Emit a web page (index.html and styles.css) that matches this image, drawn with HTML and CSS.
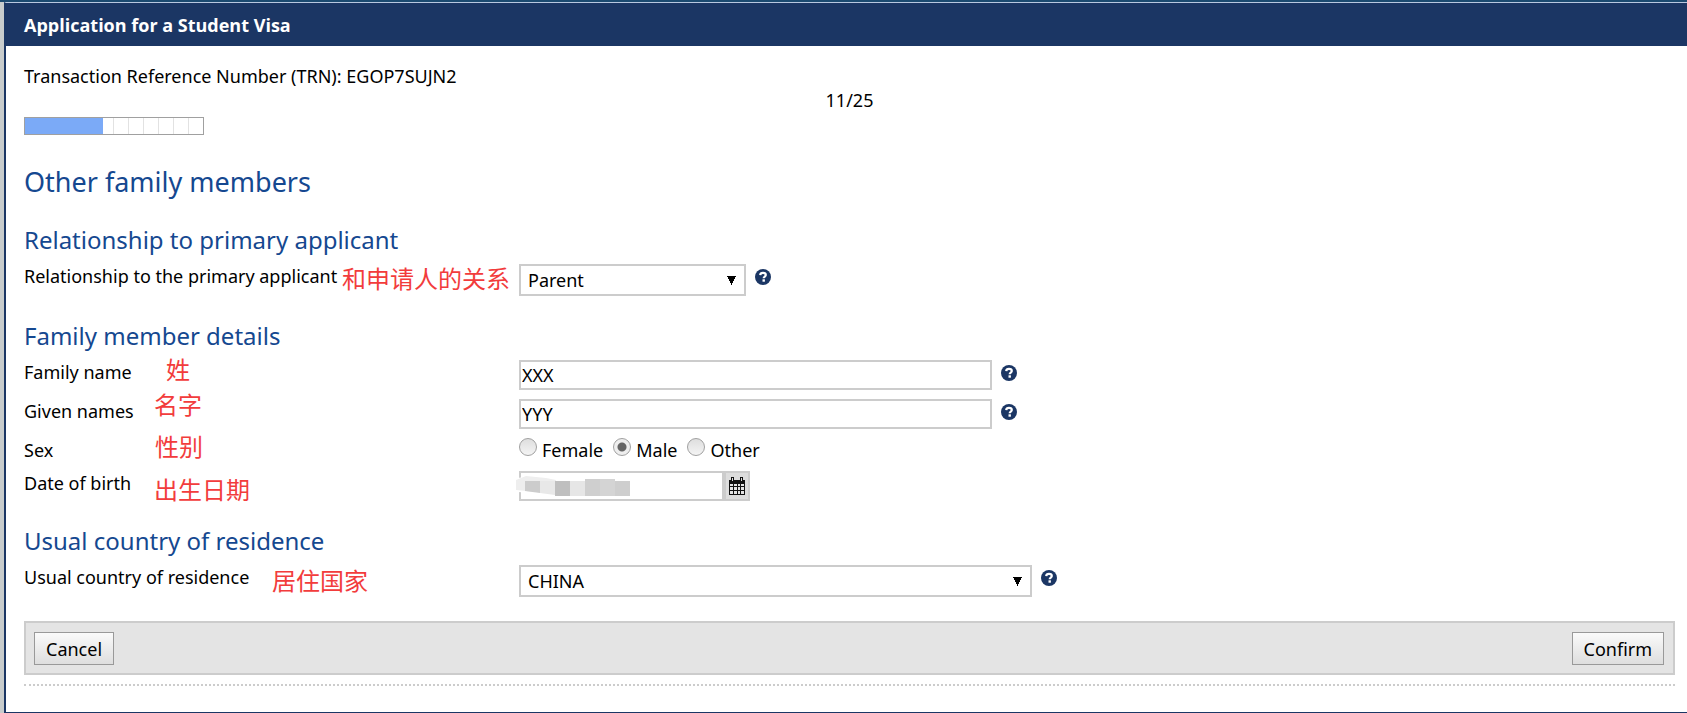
FILE: index.html
```html
<!DOCTYPE html>
<html lang="en">
<head>
    <meta charset="UTF-8">
    <title>Application for a Student Visa</title>
    <link rel="stylesheet" href="styles.css">
</head>
<body>
    <div class="frame">
        <h1 class="title">Application for a Student Visa</h1>

        <form class="content">
            <p class="trn">Transaction Reference Number (TRN): EGOP7SUJN2</p>
            <p class="step">11/25</p>
            <div class="progress">
                <div class="progress-fill" style="width: 44%"></div>
            </div>

            <h2 class="page-title">Other family members</h2>

            <!-- relationship -->
            <section class="group">
                <h3 class="group-title">Relationship to primary applicant</h3>
                <div class="row">
                    <label class="label" for="relationship">Relationship to the primary applicant</label>
                    <span class="note note-relationship" lang="zh">和申请人的关系</span>
                    <div class="field">
                        <select id="relationship" class="select select-short">
                            <option>Parent</option>
                        </select>
                        <button type="button" class="help" aria-label="Help">
                            <svg viewBox="0 0 16 16"><circle cx="8" cy="8" r="8" fill="#1b3664"/><path d="M5.2 6.1C5.3 4.6 6.6 3.9 8 3.9s2.8.7 2.8 2.1c0 1.6-2.1 1.5-2.1 3.2" fill="none" stroke="#fff" stroke-width="2.2"/><rect x="7.5" y="10.3" width="2.4" height="2.4" fill="#fff"/></svg>
                        </button>
                    </div>
                </div>
            </section>

            <!-- details -->
            <section class="group">
                <h3 class="group-title">Family member details</h3>
                <div class="row">
                    <label class="label" for="family">Family name</label>
                    <span class="note note-family" lang="zh">姓</span>
                    <div class="field">
                        <input type="text" id="family" class="text" value="XXX">
                        <button type="button" class="help" aria-label="Help">
                            <svg viewBox="0 0 16 16"><circle cx="8" cy="8" r="8" fill="#1b3664"/><path d="M5.2 6.1C5.3 4.6 6.6 3.9 8 3.9s2.8.7 2.8 2.1c0 1.6-2.1 1.5-2.1 3.2" fill="none" stroke="#fff" stroke-width="2.2"/><rect x="7.5" y="10.3" width="2.4" height="2.4" fill="#fff"/></svg>
                        </button>
                    </div>
                </div>
                <div class="row">
                    <label class="label" for="given">Given names</label>
                    <span class="note note-given" lang="zh">名字</span>
                    <div class="field">
                        <input type="text" id="given" class="text" value="YYY">
                        <button type="button" class="help" aria-label="Help">
                            <svg viewBox="0 0 16 16"><circle cx="8" cy="8" r="8" fill="#1b3664"/><path d="M5.2 6.1C5.3 4.6 6.6 3.9 8 3.9s2.8.7 2.8 2.1c0 1.6-2.1 1.5-2.1 3.2" fill="none" stroke="#fff" stroke-width="2.2"/><rect x="7.5" y="10.3" width="2.4" height="2.4" fill="#fff"/></svg>
                        </button>
                    </div>
                </div>
                <div class="row">
                    <span class="label" id="sex">Sex</span>
                    <span class="note note-sex" lang="zh">性别</span>
                    <div class="field radios" role="radiogroup" aria-labelledby="sex">
                        <label class="choice"><input type="radio" name="sex" class="radio">Female</label>
                        <label class="choice"><input type="radio" name="sex" class="radio" checked>Male</label>
                        <label class="choice"><input type="radio" name="sex" class="radio">Other</label>
                    </div>
                </div>
                <div class="row">
                    <label class="label" for="dob">Date of birth</label>
                    <span class="note note-dob" lang="zh">出生日期</span>
                    <div class="field date">
                        <input type="text" id="dob" class="text date-text">
                        <button type="button" class="calendar" aria-label="Choose date">
                            <svg viewBox="0 0 18 18"><path d="M1 3h16v15H1z" fill="#111"/><path d="M3 0h3v5H3zM12 0h3v5h-3z" fill="#111"/><path d="M4 1h1v3H4zM13 1h1v3h-1z" fill="#ddd"/><path d="M2 7h3v2H2zM6 7h3v2H6zM10 7h2v2h-2zM13 7h3v2h-3zM2 10h3v3H2zM6 10h3v3H6zM10 10h2v3h-2zM13 10h3v3h-3zM2 14h3v3H2zM6 14h3v3H6zM10 14h2v3h-2zM13 14h3v3h-3z" fill="#e4e4e4"/></svg>
                        </button>
                        <!-- blurred out date -->
                        <svg class="mask" viewBox="0 0 150 26"><path d="M2 5L20 2 60 5l90 2v12l-90 4-30-2L2 19z" fill="#fff"/><path d="M0 7l10-4 20 2 10 2v14l-30-3L0 17z" fill="#eee"/><path d="M9 8h15v12L9 18z" fill="#ccc"/><path d="M24 8h15v14l-15-2z" fill="#e8e8e8"/><path d="M39 8h15v15H39z" fill="#bfbfbf"/><path d="M54 8h15v15H54z" fill="#e6e6e6"/><path d="M69 6h15v17H69z" fill="#cfcfcf"/><path d="M84 6h15v17H84z" fill="#d4d4d4"/><path d="M99 8h15v15H99z" fill="#cecece"/></svg>
                    </div>
                </div>
            </section>

            <!-- country -->
            <section class="group">
                <h3 class="group-title">Usual country of residence</h3>
                <div class="row">
                    <label class="label" for="country">Usual country of residence</label>
                    <span class="note note-country" lang="zh">居住国家</span>
                    <div class="field">
                        <select id="country" class="select select-long">
                            <option>CHINA</option>
                        </select>
                        <button type="button" class="help" aria-label="Help">
                            <svg viewBox="0 0 16 16"><circle cx="8" cy="8" r="8" fill="#1b3664"/><path d="M5.2 6.1C5.3 4.6 6.6 3.9 8 3.9s2.8.7 2.8 2.1c0 1.6-2.1 1.5-2.1 3.2" fill="none" stroke="#fff" stroke-width="2.2"/><rect x="7.5" y="10.3" width="2.4" height="2.4" fill="#fff"/></svg>
                        </button>
                    </div>
                </div>
            </section>

            <div class="actions">
                <button type="button" class="btn">Cancel</button>
                <button type="submit" class="btn">Confirm</button>
            </div>
            <hr class="line">
        </form>
    </div>
</body>
</html>
```
FILE: styles.css
```css
*{
    box-sizing: border-box;
}
body{
    margin: 0;
    padding-left: 4px;
    border-top: 2px solid #1b4a70;
    background: #c8cccc;
    color: #000;
    font-family: "Noto Sans", "Noto Sans CJK SC", sans-serif;
    font-size: 18px;
    line-height: 26px;
}
h1, h2, h3, p{
    margin: 0;
}
input, select, button{
    font: inherit;
    color: inherit;
}

/* 외框 */
.frame{
    border: 2px solid #1b3664;
    border-top: 1px solid #b8c8e0;
    border-right: 0;
    background: #fff;
}
.title{
    padding: 9px 18px 8px;
    background: #1b3664;
    color: #fff;
    font-family: "Open Sans", sans-serif;
    font-size: 18px;
    font-weight: bold;
}
.content{
    padding: 17px 12px 26px 18px;
}

/* 진행 표시 */
.step{
    line-height: 22px;
    text-align: center;
}
.progress{
    width: 180px;
    height: 18px;
    margin-top: 6px;
    border: 1px solid #a0a0a0;
    background: repeating-linear-gradient(to right, #fff 0 13px, #e2e2e2 13px 14px, #fff 14px 15px);
}
.progress-fill{
    height: 100%;
    background: #7baaf7;
}

/* 제목 */
.page-title{
    margin-top: 29px;
    color: #154890;
    font-size: 27px;
    font-weight: normal;
    line-height: 36px;
}
.group{
    margin-top: 23px;
}
.group-title{
    margin-bottom: 7px;
    color: #154890;
    font-size: 24px;
    font-weight: normal;
    line-height: 34px;
}

/* 입력 줄 */
.row{
    position: relative;
    display: flex;
    align-items: flex-start;
    margin-bottom: 9px;
}
.label{
    flex: 0 0 495px;
    line-height: 24px;
}
.field{
    display: flex;
    gap: 9px;
}
.text{
    width: 473px;
    height: 30px;
    padding: 0 1px;
    border: 2px solid #ccc;
    background: #fff;
}
.select{
    height: 32px;
    padding: 0 7px;
    border: 2px solid #ccc;
    border-radius: 0;
    appearance: none;
    background: #fff conic-gradient(from -27deg at 50% 100%, #000 0 54deg, transparent 0) no-repeat right 8px center/9px 9px;
}
.select-short{
    width: 227px;
}
.select-long{
    width: 513px;
}
.help{
    width: 16px;
    height: 26px;
    padding: 0;
    border: 0;
    background: none;
}
.help svg{
    display: block;
    width: 16px;
    height: 16px;
}

/* 라디오 */
.radios{
    gap: 10px;
}
.choice{
    display: flex;
    gap: 5px;
    line-height: 24px;
}
.radio{
    width: 18px;
    height: 18px;
    margin: 0;
    border: 1px solid #a0a0a0;
    border-radius: 50%;
    appearance: none;
    background: linear-gradient(#dedede, #f4f4f4);
}
.radio:checked{
    background: radial-gradient(circle, #666 0 4px, #eee 5px);
}

/* 날짜 */
.date{
    position: relative;
    gap: 0;
}
.date-text{
    width: 205px;
}
.calendar{
    width: 26px;
    height: 30px;
    padding: 0;
    border: 2px solid #ccc;
    background: #ddd;
}
.calendar svg{
    display: block;
    width: 18px;
    height: 18px;
    margin: auto;
}
.mask{
    position: absolute;
    top: 2px;
    left: -3px;
    width: 150px;
    height: 26px;
}

/* 빨간 중국어 설명 */
.note{
    position: absolute;
    color: #f23c3c;
    font-family: "Noto Sans CJK SC", sans-serif;
    font-size: 24px;
}
.note-relationship{
    top: 1px;
    left: 318px;
}
.note-family{
    top: -4px;
    left: 142px;
}
.note-given{
    top: -8px;
    left: 130px;
}
.note-sex{
    top: -5px;
    left: 131px;
}
.note-dob{
    top: 5px;
    left: 130px;
}
.note-country{
    top: 2px;
    left: 248px;
}

/* 버튼 */
.actions{
    display: flex;
    justify-content: space-between;
    margin-top: 24px;
    padding: 9px 9px 8px 8px;
    border: 2px solid #ccc;
    background: #e4e4e4;
}
.btn{
    height: 33px;
    padding: 0 11px;
    border: 1px solid #999;
    background: linear-gradient(#fafafa, #dedede);
}
.line{
    margin: 9px 0 0;
    border: 0;
    border-top: 2px dotted #ccc;
}
```
